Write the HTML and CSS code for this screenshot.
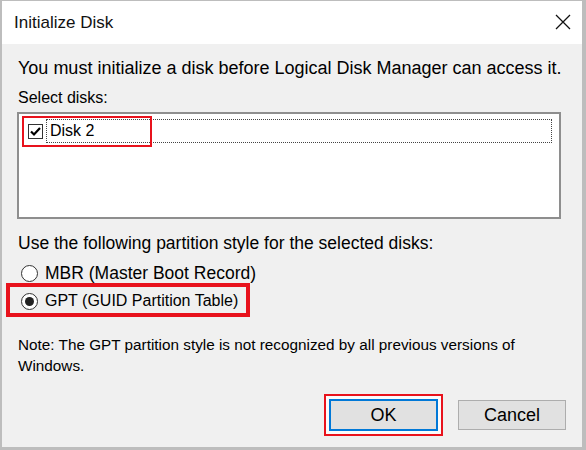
FILE: index.html
```html
<!DOCTYPE html>
<html lang="en">
<head>
  <meta charset="UTF-8" />
  <title>Initialize Disk</title>
  <link rel="stylesheet" href="styles.css">
</head>
<body>
  <div class="dialog">
    <div class="titlebar">
      <span class="title">Initialize Disk</span>
      <svg class="close" width="16" height="16" viewBox="0 0 16 16">
        <path d="M1 1 L15 15 M15 1 L1 15" stroke="#111" stroke-width="1.3" fill="none"/>
      </svg>
    </div>

    <div class="content">
      <p class="line first">You must initialize a disk before Logical Disk Manager can access it.</p>
      <p class="line select-label">Select disks:</p>

      <div class="listbox">
        <div class="list-row">
          <span class="checkbox">
            <svg width="13" height="13" viewBox="0 0 13 13">
              <path d="M2 6.5 L5 9.5 L11 3" stroke="#000" stroke-width="2.2" fill="none"/>
            </svg>
          </span>
          <span class="item-label">Disk 2</span>
          <span class="mark mark-disk"></span>
        </div>
      </div>

      <p class="line style-label">Use the following partition style for the selected disks:</p>
      <div class="radio-row">
        <span class="radio"></span>
        <span class="radio-text">MBR (Master Boot Record)</span>
      </div>
      <div class="radio-row gpt">
        <span class="radio checked"><span class="dot"></span></span>
        <span class="radio-text">GPT (GUID Partition Table)</span>
        <span class="mark mark-gpt"></span>
      </div>

      <p class="note">Note: The GPT partition style is not recognized by all previous versions of<br>Windows.</p>

      <div class="buttons">
        <span class="ok-mark"><button class="btn btn-ok">OK</button></span>
        <button class="btn">Cancel</button>
      </div>
    </div>
  </div>
</body>
</html>
```

FILE: styles.css
```css
html, body {
  margin: 0;
  padding: 0;
}
body {
  width: 586px;
  height: 450px;
  font-family: "Liberation Sans", Arial, sans-serif;
  font-size: 16px;
  line-height: 20px;
  color: #000;
  background: #fff;
}
.dialog {
  box-sizing: border-box;
  width: 586px;
  height: 450px;
  display: flex;
  flex-direction: column;
  border-style: solid;
  border-color: #bdbdbd;
  border-width: 1px 4px 3px 2px;
}
.titlebar {
  height: 43px;
  background: #fff;
  display: flex;
  justify-content: space-between;
  align-items: flex-start;
  padding-left: 12px;
  flex-shrink: 0;
}
.title {
  margin-top: 12px;
  font-size: 17px;
  color: #111;
}
.close {
  margin-top: 13px;
  margin-right: 11px;
}
.content {
  flex: 1;
  background: #f0f0f0;
  padding: 0 16px 0 16px;
  display: flex;
  flex-direction: column;
}
.line {
  margin: 0;
}
.first {
  margin-top: 14px;
  font-size: 18px;
}
.select-label {
  margin-top: 10px;
}
.listbox {
  box-sizing: border-box;
  margin-top: 4px;
  margin-left: -1px;
  width: 544px;
  height: 107px;
  border: 2px solid #8e8e8e;
  background: #fff;
  padding: 5px 7px 0 9px;
}
.list-row {
  position: relative;
  display: flex;
  align-items: center;
  height: 24px;
}
.checkbox {
  box-sizing: border-box;
  width: 15px;
  height: 15px;
  border: 1px solid #333;
  background: #fff;
  display: flex;
  align-items: center;
  justify-content: center;
}
.item-label {
  box-sizing: border-box;
  flex: 1;
  height: 24px;
  margin-left: 3px;
  padding-left: 3px;
  border: 1px dotted #444;
  display: flex;
  align-items: center;
}
.mark {
  position: absolute;
  box-sizing: border-box;
  border: 2px solid #e8121c;
}
.mark-disk {
  left: -6px;
  top: -3px;
  width: 130px;
  height: 31px;
}
.style-label {
  margin-top: 14px;
  font-size: 17.5px;
}
.radio-row {
  position: relative;
  display: flex;
  align-items: center;
  height: 28px;
  font-size: 17.5px;
}
.radio-row.gpt {
  font-size: 16px;
}
.style-label + .radio-row {
  margin-top: 6px;
}
.radio {
  box-sizing: border-box;
  width: 17px;
  height: 17px;
  margin-left: 3px;
  border: 1px solid #333;
  border-radius: 50%;
  background: #fff;
  display: flex;
  align-items: center;
  justify-content: center;
}
.dot {
  width: 9px;
  height: 9px;
  border-radius: 50%;
  background: #222;
}
.radio-text {
  margin-left: 7px;
}
.mark-gpt {
  left: -12px;
  top: -4px;
  width: 244px;
  height: 34px;
  border-width: 4px;
}
.note {
  margin: 19px 0 0 0;
  font-size: 15.3px;
  line-height: 21px;
}
.buttons {
  display: flex;
  justify-content: flex-end;
  align-items: center;
  margin-top: 18px;
}
.ok-mark {
  display: flex;
  border: 2px solid #e8121c;
  padding: 3px;
  background: #fbfbfb;
  margin-right: 15px;
}
.btn {
  box-sizing: border-box;
  width: 108px;
  height: 30px;
  font-family: "Liberation Sans", Arial, sans-serif;
  font-size: 18px;
  color: #000;
  background: #e1e1e1;
  border: 1px solid #adadad;
  padding: 0;
}
.btn-ok {
  width: 109px;
  height: 32px;
  border: 2px solid #0078d7;
}
```
